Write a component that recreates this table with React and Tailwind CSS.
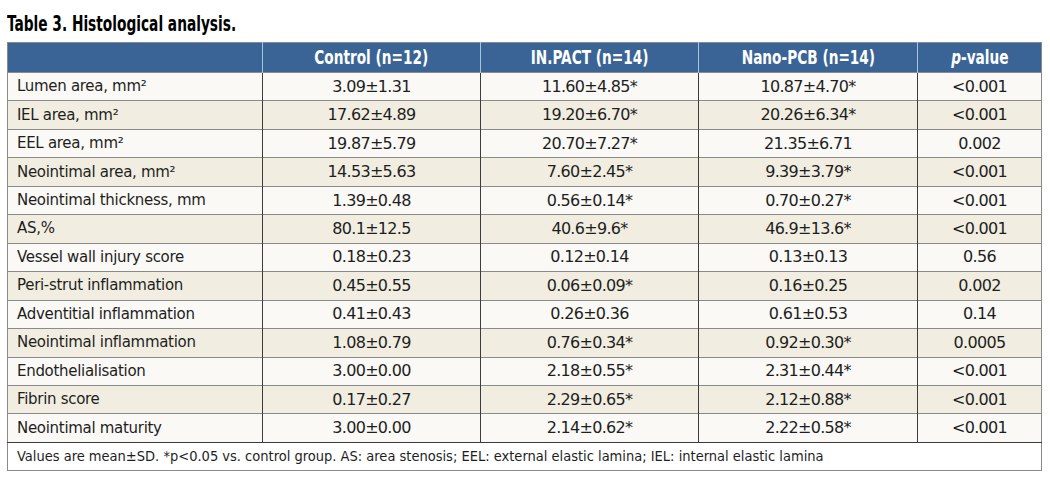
import React from 'react';

const rows = [
    ['Lumen area, mm²', '3.09±1.31', '11.60±4.85*', '10.87±4.70*', '<0.001'],
    ['IEL area, mm²', '17.62±4.89', '19.20±6.70*', '20.26±6.34*', '<0.001'],
    ['EEL area, mm²', '19.87±5.79', '20.70±7.27*', '21.35±6.71', '0.002'],
    ['Neointimal area, mm²', '14.53±5.63', '7.60±2.45*', '9.39±3.79*', '<0.001'],
    ['Neointimal thickness, mm', '1.39±0.48', '0.56±0.14*', '0.70±0.27*', '<0.001'],
    ['AS,%', '80.1±12.5', '40.6±9.6*', '46.9±13.6*', '<0.001'],
    ['Vessel wall injury score', '0.18±0.23', '0.12±0.14', '0.13±0.13', '0.56'],
    ['Peri-strut inflammation', '0.45±0.55', '0.06±0.09*', '0.16±0.25', '0.002'],
    ['Adventitial inflammation', '0.41±0.43', '0.26±0.36', '0.61±0.53', '0.14'],
    ['Neointimal inflammation', '1.08±0.79', '0.76±0.34*', '0.92±0.30*', '0.0005'],
    ['Endothelialisation', '3.00±0.00', '2.18±0.55*', '2.31±0.44*', '<0.001'],
    ['Fibrin score', '0.17±0.27', '2.29±0.65*', '2.12±0.88*', '<0.001'],
    ['Neointimal maturity', '3.00±0.00', '2.14±0.62*', '2.22±0.58*', '<0.001'],
];

const narrow = { fontFamily: '"DejaVu Sans Condensed", "DejaVu Sans", sans-serif' };

// header labels are squeezed a bit, like the print font
const Head = ({ children }) => (
    <span className="inline-block scale-x-[0.8]">{children}</span>
);

const App = () => {
    return (
        <div className="w-[1050px] h-[489px] bg-white pt-[12px] pl-[7px]">
            <h1
                className="text-[20.5px] font-bold text-black leading-[25px] mb-[5px] origin-left scale-x-[0.745] whitespace-nowrap"
                style={narrow}
            >
                Table 3. Histological analysis.
            </h1>
            <table
                className="table-fixed border-collapse w-[1034px] border border-[#8a8a8a]"
                style={{ fontFamily: '"DejaVu Sans", sans-serif' }}
            >
                <colgroup>
                    <col className="w-[255px]" />
                    <col className="w-[218px]" />
                    <col className="w-[218px]" />
                    <col className="w-[219px]" />
                    <col className="w-[124px]" />
                </colgroup>
                <thead>
                    <tr className="h-[30px] bg-[#3a6496] text-white text-[19px] font-bold leading-none" style={narrow}>
                        <th className="border-r border-[#a9c3de]"></th>
                        <th className="border-r border-[#a9c3de] font-bold"><Head>Control (n=12)</Head></th>
                        <th className="border-r border-[#a9c3de] font-bold"><Head>IN.PACT (n=14)</Head></th>
                        <th className="border-r border-[#a9c3de] font-bold"><Head>Nano-PCB (n=14)</Head></th>
                        <th className="font-bold">
                            <Head><i>p</i>-value</Head>
                        </th>
                    </tr>
                </thead>
                <tbody className="text-[16px] text-[#1e1e1e] leading-none">
                    {rows.map((r, i) => (
                        <tr
                            key={r[0]}
                            className={`h-[28.46px] border-t border-[#8a8a8a] ${i % 2 === 0 ? 'bg-[#faf9f5]' : 'bg-[#f1eee1]'}`}
                        >
                            <td className="pl-[9px] border-r border-[#3c3c3c] whitespace-nowrap text-[15px] tracking-[-0.3px]">{r[0]}</td>
                            <td className="text-center border-r border-[#3c3c3c] tracking-[-0.7px]">{r[1]}</td>
                            <td className="text-center border-r border-[#3c3c3c] tracking-[-0.7px]">{r[2]}</td>
                            <td className="text-center border-r border-[#3c3c3c] tracking-[-0.7px]">{r[3]}</td>
                            <td className="text-center tracking-[-0.7px]">{r[4]}</td>
                        </tr>
                    ))}
                    <tr className="h-[28px] border-t border-[#3c3c3c] bg-white">
                        <td colSpan={5} className="pl-[9px] text-[14.5px] text-[#1e1e1e] whitespace-nowrap tracking-normal" style={narrow}>
                            Values are mean±SD. *p&lt;0.05 vs. control group. AS: area stenosis; EEL: external elastic lamina; IEL: internal elastic lamina
                        </td>
                    </tr>
                </tbody>
            </table>
        </div>
    );
};

export default App;
